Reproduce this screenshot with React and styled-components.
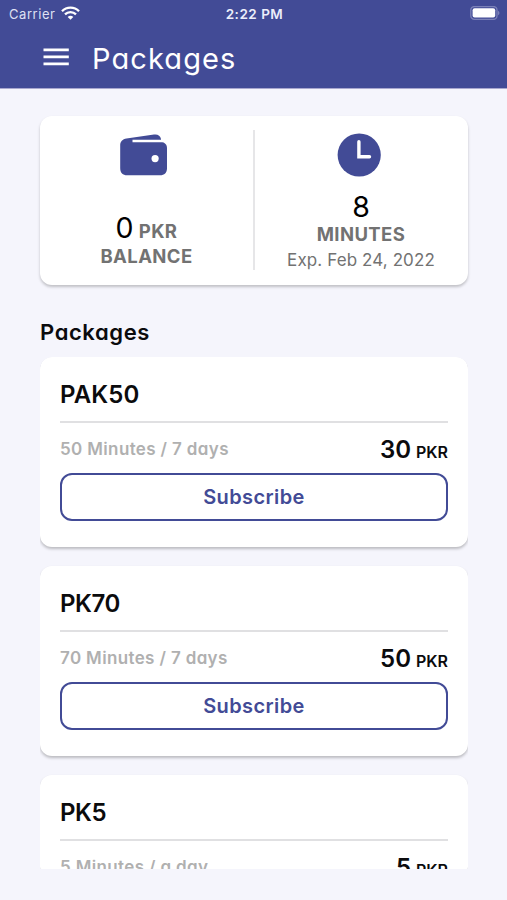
import React from 'react'
import styled, { createGlobalStyle } from 'styled-components'

const primary = '#424b96'

const GlobalStyle = createGlobalStyle`
  * {
    box-sizing: border-box;
  }
  body {
    margin: 0;
    background: #f5f5fc;
    font-family: Inter, 'Open Sans', sans-serif;
    font-feature-settings: 'cv11';
  }
`

const Screen = styled.div`
  height: 900px;
  display: flex;
  flex-direction: column;
  overflow: hidden;
`

const Header = styled.header`
  flex: none;
  height: 89px;
  background: ${primary};
  border-bottom: 1px solid #a9a8cf;
  color: #fff;
`

const StatusBar = styled.div`
  display: grid;
  grid-template-columns: 1fr auto 1fr;
  align-items: center;
  height: 27px;
  padding: 0 7px 0 9px;
  font-size: 13px;
  font-feature-settings: normal;
`

const Carrier = styled.div`
  display: flex;
  align-items: center;
  gap: 6px;
  color: #dfe1f3;
  letter-spacing: 0.55px;

  svg {
    margin-bottom: 2px;
  }
`

const Time = styled.div`
  font-size: 13.5px;
  font-weight: 600;
  color: #eceefa;
  letter-spacing: 0.5px;
`

const Battery = styled.svg`
  justify-self: end;
  margin-bottom: 1px;
`

const Toolbar = styled.div`
  display: flex;
  align-items: center;
  height: 61px;
  padding-left: 43px;
  gap: 23px;

  svg {
    margin-bottom: 1px;
  }
`

const PageTitle = styled.h1`
  margin: 0;
  padding-top: 2px;
  font-size: 29px;
  font-weight: 400;
  line-height: 60px;
  letter-spacing: 1.1px;
`

const Content = styled.main`
  flex: none;
  display: flex;
  flex-direction: column;
  padding: 27px 39px 0 40px;
`

const Summary = styled.section`
  display: grid;
  grid-template-columns: 213px 2px 1fr;
  height: 169px;
  border-radius: 12px;
  background: #fff;
  box-shadow: 0 2px 3px rgba(0, 0, 0, 0.22);
`

const Divider = styled.div`
  margin: 14px 0 15px;
  background: #e6e6e8;
`

const Stat = styled.div`
  display: flex;
  flex-direction: column;
  align-items: center;
  justify-content: space-between;
  padding: ${(p) => p.$padding};
  white-space: nowrap;

  svg {
    margin-right: ${(p) => p.$iconOffset}px;
  }
`

const StatText = styled.div`
  text-align: center;
`

const Amount = styled.span`
  font-size: 28.5px;
  font-weight: 400;
  line-height: 30px;
  color: #000;
`

const Label = styled.div`
  font-size: 18.5px;
  font-weight: 700;
  line-height: ${(p) => p.$line}px;
  letter-spacing: 0.4px;
  color: #727272;
`

const Expiry = styled.div`
  font-size: 17px;
  line-height: 27px;
  letter-spacing: 0.1px;
  color: #727272;
`

const SectionTitle = styled.h2`
  margin: 32px 0 10px;
  font-size: 22px;
  font-weight: 600;
  line-height: 30px;
  letter-spacing: 0.6px;
  color: #0b0b0d;
`

const PackageList = styled.div`
  height: 512px;
  overflow: hidden;
  border-radius: 12px 12px 2px 2px;
`

const Card = styled.article`
  height: 190px;
  margin-bottom: 19px;
  padding: 20px 20px 0;
  border-radius: 12px;
  background: #fff;
  box-shadow: 0 2px 3px rgba(0, 0, 0, 0.24);
`

const CardTitle = styled.h3`
  height: 46px;
  margin: 0;
  border-bottom: 2px solid #e0e0e2;
  font-size: 24px;
  font-weight: 600;
  line-height: 36px;
  letter-spacing: ${(p) => p.$spacing}px;
  color: #0b0b0d;
`

const CardRow = styled.div`
  display: flex;
  align-items: baseline;
  justify-content: space-between;
  height: 50px;
  line-height: 54px;
`

const Duration = styled.span`
  align-self: flex-start;
  line-height: 53px;
  font-size: 17px;
  font-weight: 600;
  letter-spacing: 0.36px;
  color: #b0b0b0;
`

const Price = styled.span`
  font-size: 24px;
  font-weight: 600;
  color: #0b0b0d;

  small {
    margin-left: 5px;
    font-size: 16px;
  }
`

const Subscribe = styled.button`
  width: 100%;
  height: 48px;
  padding: 0;
  border: 2px solid ${primary};
  border-radius: 12px;
  background: #fff;
  color: ${primary};
  font: inherit;
  font-size: 20px;
  font-weight: 600;
  letter-spacing: 0.4px;
`

const packages = [
  { name: 'PAK50', duration: '50 Minutes / 7 days', price: 30, spacing: 0.1 },
  { name: 'PK70', duration: '70 Minutes / 7 days', price: 50, spacing: -0.4 },
  { name: 'PK5', duration: '5 Minutes / a day', price: 5, spacing: -0.4 },
]

const WifiIcon = () => (
  <svg width="19" height="14" viewBox="0 0 19 14" fill="none" stroke="#fff" strokeWidth="2.3">
    <path d="M1 5.2C5.6.4 13.4.4 18 5.2" />
    <path d="M4 8.4c3-3.1 8-3.1 11 0" />
    <path d="M9.5 13.8 6.7 10.9c1.6-1.5 4-1.5 5.6 0z" fill="#fff" stroke="none" />
  </svg>
)

const BatteryIcon = () => (
  <Battery width="30" height="14" viewBox="0 0 30 14">
    <rect x="0.8" y="0.5" width="26.2" height="12.8" rx="3.6" fill="none" stroke="#7b81b8" strokeWidth="1.3" />
    <rect x="2.6" y="2.2" width="22.6" height="9.2" rx="2" fill="#fff" />
    <path d="M28 4.8c2 .8 2 3.6 0 4.4z" fill="#7b81b8" />
  </Battery>
)

const MenuIcon = () => (
  <svg width="26" height="18" viewBox="0 0 26 18" fill="#fff">
    <path d="M.5.5h25.3v2.7H.5zM.5 7.5h25.3v2.7H.5zM.5 14.5h25.3v2.7H.5z" />
  </svg>
)

const WalletIcon = () => (
  <svg width="48" height="44" viewBox="0 0 48 44">
    <path
      d="M6.5 5.5 34 1.500c3.600-.6 6.300 1 7 4.400V8.800c4 .7 6 2.800 6 6.700v19.800c0 4.500-2.500 7-7 7H7.200c-4.500 0-7-2.500-7-7V12.500c0-4 2.300-6.400 6.300-7z"
      fill={primary}
    />
    <path d="M12.5 6.700H42l1.500 2.500h-31z" fill="#fff" />
    <circle cx="35.1" cy="25.600" r="3.600" fill="#fff" />
  </svg>
)

const ClockIcon = () => (
  <svg width="44" height="44" viewBox="0 0 44 44">
    <circle cx="22.2" cy="22" r="21.6" fill={primary} />
    <path d="M21.9 8.800v15h10.600" fill="none" stroke="#fff" strokeWidth="3.4" strokeLinecap="round" />
  </svg>
)

const App = () => (
  <>
    <GlobalStyle />
    <Screen>
      <Header>
        <StatusBar>
          <Carrier>
            Carrier <WifiIcon />
          </Carrier>
          <Time>2:22 PM</Time>
          <BatteryIcon />
        </StatusBar>
        <Toolbar>
          <MenuIcon />
          <PageTitle>Packages</PageTitle>
        </Toolbar>
      </Header>
      <Content>
        <Summary>
          <Stat $padding="17px 0 17px" $iconOffset={5}>
            <WalletIcon />
            <StatText>
              <Label $line={26}>
                <Amount>0</Amount> PKR
              </Label>
              <Label $line={24}>BALANCE</Label>
            </StatText>
          </Stat>
          <Divider />
          <Stat $padding="17px 1px 11px 0" $iconOffset={4}>
            <ClockIcon />
            <StatText>
              <Amount as="div">8</Amount>
              <Label $line={25}>MINUTES</Label>
              <Expiry>Exp. Feb 24, 2022</Expiry>
            </StatText>
          </Stat>
        </Summary>
        <SectionTitle>Packages</SectionTitle>
        <PackageList>
          {packages.map((item) => (
            <Card key={item.name}>
              <CardTitle $spacing={item.spacing}>{item.name}</CardTitle>
              <CardRow>
                <Duration>{item.duration}</Duration>
                <Price>
                  {item.price}
                  <small>PKR</small>
                </Price>
              </CardRow>
              <Subscribe>Subscribe</Subscribe>
            </Card>
          ))}
        </PackageList>
      </Content>
    </Screen>
  </>
)

export default App
